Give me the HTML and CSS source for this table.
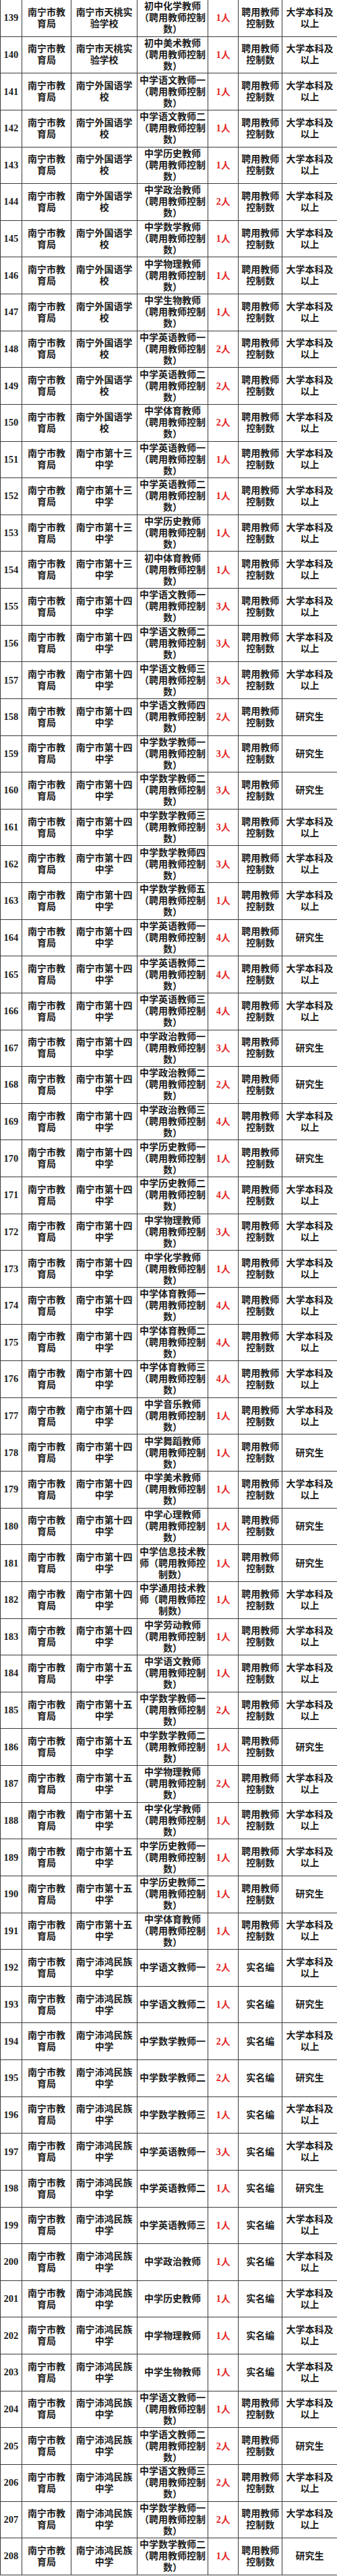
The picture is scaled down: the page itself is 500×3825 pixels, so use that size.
FILE: index.html
```html
<!DOCTYPE html>
<html lang="zh-CN">
<head>
<meta charset="utf-8">
<title>岗位表</title>
<link rel="stylesheet" href="styles.css">
</head>
<body>
<div class="sheet">
<div class="row"><div class="c num">139</div><div class="c">南宁市教育局</div><div class="c">南宁市天桃实验学校</div><div class="c">初中化学教师（聘用教师控制数）</div><div class="c qty">1人</div><div class="c">聘用教师控制数</div><div class="c">大学本科及以上</div></div>
<div class="row"><div class="c num">140</div><div class="c">南宁市教育局</div><div class="c">南宁市天桃实验学校</div><div class="c">初中美术教师（聘用教师控制数）</div><div class="c qty">1人</div><div class="c">聘用教师控制数</div><div class="c">大学本科及以上</div></div>
<div class="row"><div class="c num">141</div><div class="c">南宁市教育局</div><div class="c">南宁外国语学校</div><div class="c">中学语文教师一（聘用教师控制数）</div><div class="c qty">1人</div><div class="c">聘用教师控制数</div><div class="c">大学本科及以上</div></div>
<div class="row"><div class="c num">142</div><div class="c">南宁市教育局</div><div class="c">南宁外国语学校</div><div class="c">中学语文教师二（聘用教师控制数）</div><div class="c qty">1人</div><div class="c">聘用教师控制数</div><div class="c">大学本科及以上</div></div>
<div class="row"><div class="c num">143</div><div class="c">南宁市教育局</div><div class="c">南宁外国语学校</div><div class="c">中学历史教师（聘用教师控制数）</div><div class="c qty">1人</div><div class="c">聘用教师控制数</div><div class="c">大学本科及以上</div></div>
<div class="row"><div class="c num">144</div><div class="c">南宁市教育局</div><div class="c">南宁外国语学校</div><div class="c">中学政治教师（聘用教师控制数）</div><div class="c qty">2人</div><div class="c">聘用教师控制数</div><div class="c">大学本科及以上</div></div>
<div class="row"><div class="c num">145</div><div class="c">南宁市教育局</div><div class="c">南宁外国语学校</div><div class="c">中学数学教师（聘用教师控制数）</div><div class="c qty">1人</div><div class="c">聘用教师控制数</div><div class="c">大学本科及以上</div></div>
<div class="row"><div class="c num">146</div><div class="c">南宁市教育局</div><div class="c">南宁外国语学校</div><div class="c">中学物理教师（聘用教师控制数）</div><div class="c qty">1人</div><div class="c">聘用教师控制数</div><div class="c">大学本科及以上</div></div>
<div class="row"><div class="c num">147</div><div class="c">南宁市教育局</div><div class="c">南宁外国语学校</div><div class="c">中学生物教师（聘用教师控制数）</div><div class="c qty">1人</div><div class="c">聘用教师控制数</div><div class="c">大学本科及以上</div></div>
<div class="row"><div class="c num">148</div><div class="c">南宁市教育局</div><div class="c">南宁外国语学校</div><div class="c">中学英语教师一（聘用教师控制数）</div><div class="c qty">2人</div><div class="c">聘用教师控制数</div><div class="c">大学本科及以上</div></div>
<div class="row"><div class="c num">149</div><div class="c">南宁市教育局</div><div class="c">南宁外国语学校</div><div class="c">中学英语教师二（聘用教师控制数）</div><div class="c qty">2人</div><div class="c">聘用教师控制数</div><div class="c">大学本科及以上</div></div>
<div class="row"><div class="c num">150</div><div class="c">南宁市教育局</div><div class="c">南宁外国语学校</div><div class="c">中学体育教师（聘用教师控制数）</div><div class="c qty">2人</div><div class="c">聘用教师控制数</div><div class="c">大学本科及以上</div></div>
<div class="row"><div class="c num">151</div><div class="c">南宁市教育局</div><div class="c">南宁市第十三中学</div><div class="c">中学英语教师一（聘用教师控制数）</div><div class="c qty">1人</div><div class="c">聘用教师控制数</div><div class="c">大学本科及以上</div></div>
<div class="row"><div class="c num">152</div><div class="c">南宁市教育局</div><div class="c">南宁市第十三中学</div><div class="c">中学英语教师二（聘用教师控制数）</div><div class="c qty">1人</div><div class="c">聘用教师控制数</div><div class="c">大学本科及以上</div></div>
<div class="row"><div class="c num">153</div><div class="c">南宁市教育局</div><div class="c">南宁市第十三中学</div><div class="c">中学历史教师（聘用教师控制数）</div><div class="c qty">1人</div><div class="c">聘用教师控制数</div><div class="c">大学本科及以上</div></div>
<div class="row"><div class="c num">154</div><div class="c">南宁市教育局</div><div class="c">南宁市第十三中学</div><div class="c">初中体育教师（聘用教师控制数）</div><div class="c qty">1人</div><div class="c">聘用教师控制数</div><div class="c">大学本科及以上</div></div>
<div class="row"><div class="c num">155</div><div class="c">南宁市教育局</div><div class="c">南宁市第十四中学</div><div class="c">中学语文教师一（聘用教师控制数）</div><div class="c qty">3人</div><div class="c">聘用教师控制数</div><div class="c">大学本科及以上</div></div>
<div class="row"><div class="c num">156</div><div class="c">南宁市教育局</div><div class="c">南宁市第十四中学</div><div class="c">中学语文教师二（聘用教师控制数）</div><div class="c qty">3人</div><div class="c">聘用教师控制数</div><div class="c">大学本科及以上</div></div>
<div class="row"><div class="c num">157</div><div class="c">南宁市教育局</div><div class="c">南宁市第十四中学</div><div class="c">中学语文教师三（聘用教师控制数）</div><div class="c qty">3人</div><div class="c">聘用教师控制数</div><div class="c">大学本科及以上</div></div>
<div class="row"><div class="c num">158</div><div class="c">南宁市教育局</div><div class="c">南宁市第十四中学</div><div class="c">中学语文教师四（聘用教师控制数）</div><div class="c qty">2人</div><div class="c">聘用教师控制数</div><div class="c">研究生</div></div>
<div class="row"><div class="c num">159</div><div class="c">南宁市教育局</div><div class="c">南宁市第十四中学</div><div class="c">中学数学教师一（聘用教师控制数）</div><div class="c qty">3人</div><div class="c">聘用教师控制数</div><div class="c">研究生</div></div>
<div class="row"><div class="c num">160</div><div class="c">南宁市教育局</div><div class="c">南宁市第十四中学</div><div class="c">中学数学教师二（聘用教师控制数）</div><div class="c qty">3人</div><div class="c">聘用教师控制数</div><div class="c">研究生</div></div>
<div class="row"><div class="c num">161</div><div class="c">南宁市教育局</div><div class="c">南宁市第十四中学</div><div class="c">中学数学教师三（聘用教师控制数）</div><div class="c qty">3人</div><div class="c">聘用教师控制数</div><div class="c">大学本科及以上</div></div>
<div class="row"><div class="c num">162</div><div class="c">南宁市教育局</div><div class="c">南宁市第十四中学</div><div class="c">中学数学教师四（聘用教师控制数）</div><div class="c qty">3人</div><div class="c">聘用教师控制数</div><div class="c">大学本科及以上</div></div>
<div class="row"><div class="c num">163</div><div class="c">南宁市教育局</div><div class="c">南宁市第十四中学</div><div class="c">中学数学教师五（聘用教师控制数）</div><div class="c qty">1人</div><div class="c">聘用教师控制数</div><div class="c">大学本科及以上</div></div>
<div class="row"><div class="c num">164</div><div class="c">南宁市教育局</div><div class="c">南宁市第十四中学</div><div class="c">中学英语教师一（聘用教师控制数）</div><div class="c qty">4人</div><div class="c">聘用教师控制数</div><div class="c">研究生</div></div>
<div class="row"><div class="c num">165</div><div class="c">南宁市教育局</div><div class="c">南宁市第十四中学</div><div class="c">中学英语教师二（聘用教师控制数）</div><div class="c qty">4人</div><div class="c">聘用教师控制数</div><div class="c">大学本科及以上</div></div>
<div class="row"><div class="c num">166</div><div class="c">南宁市教育局</div><div class="c">南宁市第十四中学</div><div class="c">中学英语教师三（聘用教师控制数）</div><div class="c qty">4人</div><div class="c">聘用教师控制数</div><div class="c">大学本科及以上</div></div>
<div class="row"><div class="c num">167</div><div class="c">南宁市教育局</div><div class="c">南宁市第十四中学</div><div class="c">中学政治教师一（聘用教师控制数）</div><div class="c qty">3人</div><div class="c">聘用教师控制数</div><div class="c">研究生</div></div>
<div class="row"><div class="c num">168</div><div class="c">南宁市教育局</div><div class="c">南宁市第十四中学</div><div class="c">中学政治教师二（聘用教师控制数）</div><div class="c qty">2人</div><div class="c">聘用教师控制数</div><div class="c">研究生</div></div>
<div class="row"><div class="c num">169</div><div class="c">南宁市教育局</div><div class="c">南宁市第十四中学</div><div class="c">中学政治教师三（聘用教师控制数）</div><div class="c qty">4人</div><div class="c">聘用教师控制数</div><div class="c">大学本科及以上</div></div>
<div class="row"><div class="c num">170</div><div class="c">南宁市教育局</div><div class="c">南宁市第十四中学</div><div class="c">中学历史教师一（聘用教师控制数）</div><div class="c qty">1人</div><div class="c">聘用教师控制数</div><div class="c">研究生</div></div>
<div class="row"><div class="c num">171</div><div class="c">南宁市教育局</div><div class="c">南宁市第十四中学</div><div class="c">中学历史教师二（聘用教师控制数）</div><div class="c qty">4人</div><div class="c">聘用教师控制数</div><div class="c">大学本科及以上</div></div>
<div class="row"><div class="c num">172</div><div class="c">南宁市教育局</div><div class="c">南宁市第十四中学</div><div class="c">中学物理教师（聘用教师控制数）</div><div class="c qty">3人</div><div class="c">聘用教师控制数</div><div class="c">大学本科及以上</div></div>
<div class="row"><div class="c num">173</div><div class="c">南宁市教育局</div><div class="c">南宁市第十四中学</div><div class="c">中学化学教师（聘用教师控制数）</div><div class="c qty">1人</div><div class="c">聘用教师控制数</div><div class="c">大学本科及以上</div></div>
<div class="row"><div class="c num">174</div><div class="c">南宁市教育局</div><div class="c">南宁市第十四中学</div><div class="c">中学体育教师一（聘用教师控制数）</div><div class="c qty">4人</div><div class="c">聘用教师控制数</div><div class="c">大学本科及以上</div></div>
<div class="row"><div class="c num">175</div><div class="c">南宁市教育局</div><div class="c">南宁市第十四中学</div><div class="c">中学体育教师二（聘用教师控制数）</div><div class="c qty">4人</div><div class="c">聘用教师控制数</div><div class="c">大学本科及以上</div></div>
<div class="row"><div class="c num">176</div><div class="c">南宁市教育局</div><div class="c">南宁市第十四中学</div><div class="c">中学体育教师三（聘用教师控制数）</div><div class="c qty">4人</div><div class="c">聘用教师控制数</div><div class="c">大学本科及以上</div></div>
<div class="row"><div class="c num">177</div><div class="c">南宁市教育局</div><div class="c">南宁市第十四中学</div><div class="c">中学音乐教师（聘用教师控制数）</div><div class="c qty">1人</div><div class="c">聘用教师控制数</div><div class="c">大学本科及以上</div></div>
<div class="row"><div class="c num">178</div><div class="c">南宁市教育局</div><div class="c">南宁市第十四中学</div><div class="c">中学舞蹈教师（聘用教师控制数）</div><div class="c qty">1人</div><div class="c">聘用教师控制数</div><div class="c">研究生</div></div>
<div class="row"><div class="c num">179</div><div class="c">南宁市教育局</div><div class="c">南宁市第十四中学</div><div class="c">中学美术教师（聘用教师控制数）</div><div class="c qty">1人</div><div class="c">聘用教师控制数</div><div class="c">大学本科及以上</div></div>
<div class="row"><div class="c num">180</div><div class="c">南宁市教育局</div><div class="c">南宁市第十四中学</div><div class="c">中学心理教师（聘用教师控制数）</div><div class="c qty">1人</div><div class="c">聘用教师控制数</div><div class="c">研究生</div></div>
<div class="row"><div class="c num">181</div><div class="c">南宁市教育局</div><div class="c">南宁市第十四中学</div><div class="c">中学信息技术教师（聘用教师控制数）</div><div class="c qty">1人</div><div class="c">聘用教师控制数</div><div class="c">研究生</div></div>
<div class="row"><div class="c num">182</div><div class="c">南宁市教育局</div><div class="c">南宁市第十四中学</div><div class="c">中学通用技术教师（聘用教师控制数）</div><div class="c qty">1人</div><div class="c">聘用教师控制数</div><div class="c">大学本科及以上</div></div>
<div class="row"><div class="c num">183</div><div class="c">南宁市教育局</div><div class="c">南宁市第十四中学</div><div class="c">中学劳动教师（聘用教师控制数）</div><div class="c qty">1人</div><div class="c">聘用教师控制数</div><div class="c">大学本科及以上</div></div>
<div class="row"><div class="c num">184</div><div class="c">南宁市教育局</div><div class="c">南宁市第十五中学</div><div class="c">中学语文教师（聘用教师控制数）</div><div class="c qty">1人</div><div class="c">聘用教师控制数</div><div class="c">大学本科及以上</div></div>
<div class="row"><div class="c num">185</div><div class="c">南宁市教育局</div><div class="c">南宁市第十五中学</div><div class="c">中学数学教师一（聘用教师控制数）</div><div class="c qty">2人</div><div class="c">聘用教师控制数</div><div class="c">大学本科及以上</div></div>
<div class="row"><div class="c num">186</div><div class="c">南宁市教育局</div><div class="c">南宁市第十五中学</div><div class="c">中学数学教师二（聘用教师控制数）</div><div class="c qty">1人</div><div class="c">聘用教师控制数</div><div class="c">研究生</div></div>
<div class="row"><div class="c num">187</div><div class="c">南宁市教育局</div><div class="c">南宁市第十五中学</div><div class="c">中学物理教师（聘用教师控制数）</div><div class="c qty">2人</div><div class="c">聘用教师控制数</div><div class="c">大学本科及以上</div></div>
<div class="row"><div class="c num">188</div><div class="c">南宁市教育局</div><div class="c">南宁市第十五中学</div><div class="c">中学化学教师（聘用教师控制数）</div><div class="c qty">1人</div><div class="c">聘用教师控制数</div><div class="c">大学本科及以上</div></div>
<div class="row"><div class="c num">189</div><div class="c">南宁市教育局</div><div class="c">南宁市第十五中学</div><div class="c">中学历史教师一（聘用教师控制数）</div><div class="c qty">1人</div><div class="c">聘用教师控制数</div><div class="c">大学本科及以上</div></div>
<div class="row"><div class="c num">190</div><div class="c">南宁市教育局</div><div class="c">南宁市第十五中学</div><div class="c">中学历史教师二（聘用教师控制数）</div><div class="c qty">1人</div><div class="c">聘用教师控制数</div><div class="c">研究生</div></div>
<div class="row"><div class="c num">191</div><div class="c">南宁市教育局</div><div class="c">南宁市第十五中学</div><div class="c">中学体育教师（聘用教师控制数）</div><div class="c qty">1人</div><div class="c">聘用教师控制数</div><div class="c">大学本科及以上</div></div>
<div class="row"><div class="c num">192</div><div class="c">南宁市教育局</div><div class="c">南宁沛鸿民族中学</div><div class="c">中学语文教师一</div><div class="c qty">2人</div><div class="c">实名编</div><div class="c">大学本科及以上</div></div>
<div class="row"><div class="c num">193</div><div class="c">南宁市教育局</div><div class="c">南宁沛鸿民族中学</div><div class="c">中学语文教师二</div><div class="c qty">1人</div><div class="c">实名编</div><div class="c">研究生</div></div>
<div class="row"><div class="c num">194</div><div class="c">南宁市教育局</div><div class="c">南宁沛鸿民族中学</div><div class="c">中学数学教师一</div><div class="c qty">2人</div><div class="c">实名编</div><div class="c">大学本科及以上</div></div>
<div class="row"><div class="c num">195</div><div class="c">南宁市教育局</div><div class="c">南宁沛鸿民族中学</div><div class="c">中学数学教师二</div><div class="c qty">2人</div><div class="c">实名编</div><div class="c">研究生</div></div>
<div class="row"><div class="c num">196</div><div class="c">南宁市教育局</div><div class="c">南宁沛鸿民族中学</div><div class="c">中学数学教师三</div><div class="c qty">1人</div><div class="c">实名编</div><div class="c">大学本科及以上</div></div>
<div class="row"><div class="c num">197</div><div class="c">南宁市教育局</div><div class="c">南宁沛鸿民族中学</div><div class="c">中学英语教师一</div><div class="c qty">3人</div><div class="c">实名编</div><div class="c">大学本科及以上</div></div>
<div class="row"><div class="c num">198</div><div class="c">南宁市教育局</div><div class="c">南宁沛鸿民族中学</div><div class="c">中学英语教师二</div><div class="c qty">1人</div><div class="c">实名编</div><div class="c">研究生</div></div>
<div class="row"><div class="c num">199</div><div class="c">南宁市教育局</div><div class="c">南宁沛鸿民族中学</div><div class="c">中学英语教师三</div><div class="c qty">1人</div><div class="c">实名编</div><div class="c">大学本科及以上</div></div>
<div class="row"><div class="c num">200</div><div class="c">南宁市教育局</div><div class="c">南宁沛鸿民族中学</div><div class="c">中学政治教师</div><div class="c qty">1人</div><div class="c">实名编</div><div class="c">大学本科及以上</div></div>
<div class="row"><div class="c num">201</div><div class="c">南宁市教育局</div><div class="c">南宁沛鸿民族中学</div><div class="c">中学历史教师</div><div class="c qty">1人</div><div class="c">实名编</div><div class="c">大学本科及以上</div></div>
<div class="row"><div class="c num">202</div><div class="c">南宁市教育局</div><div class="c">南宁沛鸿民族中学</div><div class="c">中学物理教师</div><div class="c qty">1人</div><div class="c">实名编</div><div class="c">大学本科及以上</div></div>
<div class="row"><div class="c num">203</div><div class="c">南宁市教育局</div><div class="c">南宁沛鸿民族中学</div><div class="c">中学生物教师</div><div class="c qty">1人</div><div class="c">实名编</div><div class="c">大学本科及以上</div></div>
<div class="row"><div class="c num">204</div><div class="c">南宁市教育局</div><div class="c">南宁沛鸿民族中学</div><div class="c">中学语文教师一（聘用教师控制数）</div><div class="c qty">1人</div><div class="c">聘用教师控制数</div><div class="c">大学本科及以上</div></div>
<div class="row"><div class="c num">205</div><div class="c">南宁市教育局</div><div class="c">南宁沛鸿民族中学</div><div class="c">中学语文教师二（聘用教师控制数）</div><div class="c qty">2人</div><div class="c">聘用教师控制数</div><div class="c">研究生</div></div>
<div class="row"><div class="c num">206</div><div class="c">南宁市教育局</div><div class="c">南宁沛鸿民族中学</div><div class="c">中学语文教师三（聘用教师控制数）</div><div class="c qty">2人</div><div class="c">聘用教师控制数</div><div class="c">大学本科及以上</div></div>
<div class="row"><div class="c num">207</div><div class="c">南宁市教育局</div><div class="c">南宁沛鸿民族中学</div><div class="c">中学数学教师一（聘用教师控制数）</div><div class="c qty">2人</div><div class="c">聘用教师控制数</div><div class="c">大学本科及以上</div></div>
<div class="row"><div class="c num">208</div><div class="c">南宁市教育局</div><div class="c">南宁沛鸿民族中学</div><div class="c">中学数学教师二（聘用教师控制数）</div><div class="c qty">1人</div><div class="c">聘用教师控制数</div><div class="c">研究生</div></div>
</div>
</body>
</html>
```

FILE: styles.css
```css
html, body {
  margin: 0;
  padding: 0;
  background: #ffffff;
}

.sheet {
  width: 500px;
  font-family: "Liberation Serif", "Noto Sans CJK SC", serif;
  font-size: 14px;
  line-height: 17px;
  font-weight: 700;
  color: #1c1c1c;
}

.row {
  display: grid;
  grid-template-columns: 31.7px 73.6px 97.7px 105.3px 45px 65px 81.7px;
  height: 54.63px;
  box-sizing: border-box;
  border-bottom: 1px solid #3a3a3a;
  border-left: 1px solid #3a3a3a;
}

.c {
  display: flex;
  align-items: center;
  justify-content: center;
  text-align: center;
  box-sizing: border-box;
  padding: 0 2px;
  border-right: 1px solid #3a3a3a;
  overflow: hidden;
}

.num {
  font-size: 14.5px;
  padding: 0;
}

.qty {
  color: #e3231f;
}
```
